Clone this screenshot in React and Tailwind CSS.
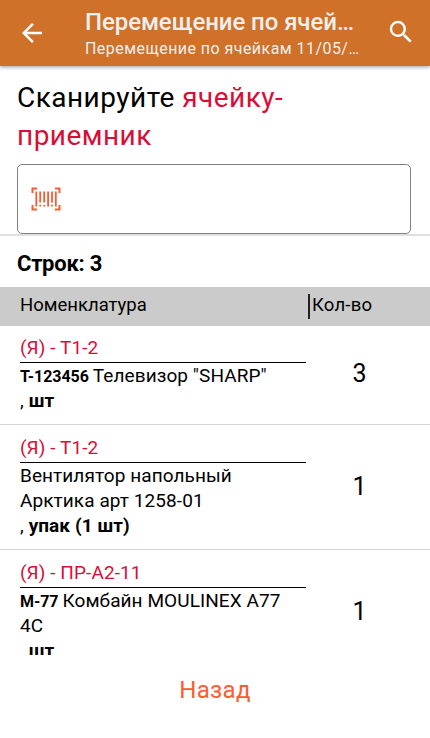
import React from "react";

const rows = [
  { cell: "(Я) - Т1-2", code: "Т-123456", name: "Телевизор \"SHARP\"", unit: "шт", count: 3 },
  { cell: "(Я) - Т1-2", code: "", name: "Вентилятор напольный Арктика арт 1258-01", unit: "упак (1 шт)", count: 1 },
  { cell: "(Я) - ПР-А2-11", code: "М-77", name: "Комбайн MOULINEX А77 4С", unit: "шт", count: 1 },
];

const App = () => {
  return (
    <div className="flex h-[738px] w-[430px] flex-col overflow-hidden bg-white font-['Roboto','Noto_Sans',sans-serif] text-black">

      {/* HEADER */}
      <header className="z-10 flex h-[66px] shrink-0 items-start bg-[#cf7128] text-[#eeeeee] shadow-[0_1px_4px_rgba(0,0,0,0.4)]">
        <button className="mt-[18px] ml-[17px] shrink-0 text-white" aria-label="Назад">
          <BackIcon />
        </button>
        <div className="ml-[38px] w-[277px] shrink-0 pt-[7px]">
          <h1 className="w-[274px] truncate text-[24px] leading-[30px] font-medium tracking-[-0.08px]">
            Перемещение по ячейкам
          </h1>
          <p className="w-[277px] truncate pt-px text-[16px] leading-[22px] tracking-[0.45px]">
            Перемещение по ячейкам 11/05/2023
          </p>
        </div>
        <button className="mt-[17px] ml-[24px] shrink-0 text-white" aria-label="Поиск">
          <SearchIcon />
        </button>
      </header>

      {/* SCAN */}
      <section className="shrink-0 border-b-2 border-[#e0e0e0] px-[17px] pt-[13px]">
        <h2 className="text-[28px] leading-[38px] tracking-[0.47px]">
          Сканируйте <span className="text-[#d90d36]">ячейку-приемник</span>
        </h2>
        <div className="mt-[9px] flex h-[70px] w-[394px] items-center rounded-[5px] border border-[#808080] pl-[13px]">
          <BarcodeIcon />
        </div>
      </section>

      <h3 className="h-[51px] shrink-0 pl-[17px] pt-[14px] text-[22px] leading-[28px] font-bold tracking-[-0.25px]">
        Строк: 3
      </h3>

      {/* TABLE */}
      <div className="flex h-[39px] shrink-0 items-center bg-[#cbcbcb] text-[18.5px]">
        <span className="w-[308px] pb-[2px] pl-[20px]">Номенклатура</span>
        <span className="h-[25px] border-l-2 border-[#222222] pl-[2px] leading-[23px] tracking-[0.2px]">Кол-во</span>
      </div>

      <div className="h-[329px] shrink-0 overflow-hidden">
        {rows.map((row, i) => (
          <Row key={i} {...row} />
        ))}
      </div>

      {/* FOOTER */}
      <button className="mt-[17px] self-center text-[24px] leading-[36px] tracking-[0.3px] text-[#ff5a30]">
        Назад
      </button>
    </div>
  );
};

const Row = ({ cell, code, name, unit, count }) => (
  <div className="flex items-center border-b border-[#d4d4d4] pt-[10px] pb-[11px] pl-[20px] text-[19px] leading-[25px] tracking-[0.08px] first:pt-[9px]">
    <div className="w-[286px]">
      <p className="h-[28px] border-b border-black text-[#d90d36]">{cell}</p>
      <p className="pr-[20px]">
        {code && <b className="text-[16px] leading-none tracking-[-0.05px]">{code} </b>}
        {name}
      </p>
      <p>
        , <b>{unit}</b>
      </p>
    </div>
    <span className="w-[107px] pb-px text-center text-[25px]">{count}</span>
  </div>
);

const BackIcon = () => (
  <svg width="30" height="30" viewBox="0 0 24 24" fill="currentColor">
    <path d="M20 11H7.83l5.59-5.59L12 4l-8 8 8 8 1.41-1.41L7.83 13H20v-2z" />
  </svg>
);

const SearchIcon = () => (
  <svg width="30" height="30" viewBox="0 0 24 24" fill="currentColor">
    <path d="M15.5 14h-.79l-.28-.27A6.47 6.47 0 0 0 16 9.5 6.5 6.5 0 1 0 9.5 16c1.61 0 3.09-.59 4.23-1.57l.27.28v.79l5 4.99L20.49 19l-4.99-5zm-6 0C7.01 14 5 11.99 5 9.5S7.01 5 9.5 5 14 7.01 14 9.5 11.99 14 9.5 14z" />
  </svg>
);

const BarcodeIcon = () => (
  <svg width="30" height="24" viewBox="0 0 30 24" fill="none" stroke="#f75c33">
    <path strokeWidth="2" d="M1.5 6V1.5H6M24 1.5h4.5V6M1.5 18v4.5H6M24 22.5h4.5V18" />
    <path strokeWidth="1.8" d="M5.3 4.5v15M9.2 4.5v11M9.2 17.7v1.8M13.2 4.5v11M13.2 17.7v1.8M17.1 4.5v15M21 4.5v11M21 17.7v1.8M24.8 4.5v15" />
  </svg>
);

export default App;
